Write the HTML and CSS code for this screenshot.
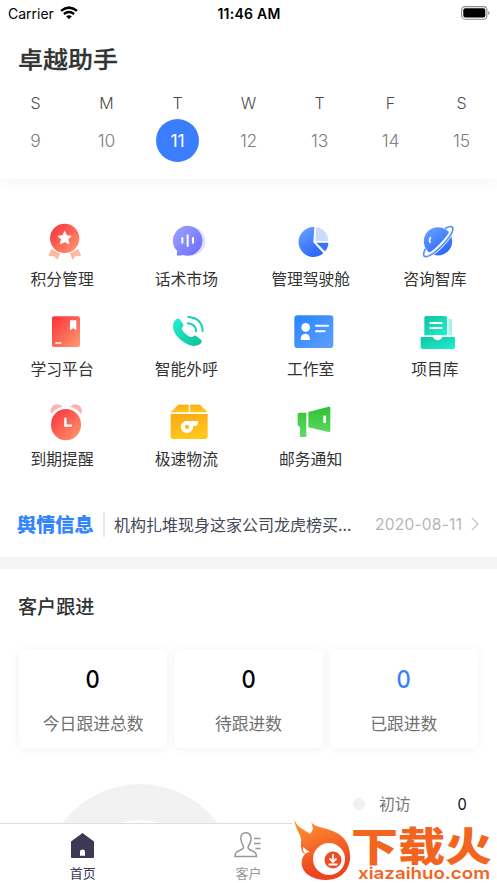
FILE: index.html
```html
<!DOCTYPE html>
<html lang="zh-CN">
<head>
<meta charset="utf-8">
<title>卓越助手</title>
<link rel="stylesheet" href="styles.css">
</head>
<body>
<div class="screen">
  <header class="top">
    <div class="status">
      <div class="carrier"><span>Carrier</span>
        <svg width="18" height="14" viewBox="0 0 18 14" fill="none" stroke="#000" stroke-width="2.5"><path d="M1 4.9Q9-1.7 17 4.9M3.9 8Q9 3.9 14.1 8"/><path d="M9 13.2L6.1 10.3Q9 8.1 11.9 10.3Z" fill="#000" stroke="none"/></svg>
      </div>
      <time class="clock">11:46 AM</time>
      <svg class="battery" width="29" height="14" viewBox="0 0 29 14"><rect x=".6" y=".6" width="25.3" height="12.6" rx="3.4" fill="none" stroke="#8c8c8c" stroke-width="1.1"/><rect x="2.3" y="2.3" width="22" height="9.3" rx="2" /><path d="M27.2 5q1.4.6 1.4 2t-1.4 2z" fill="#8c8c8c"/></svg>
    </div>
    <h1 class="app-name">卓越助手</h1>
    <div class="week names"><span>S</span><span>M</span><span>T</span><span>W</span><span>T</span><span>F</span><span>S</span></div>
    <div class="week days"><span>9</span><span>10</span><span class="today">11</span><span>12</span><span>13</span><span>14</span><span>15</span></div>
  </header>

  <svg class="defs" width="0" height="0">
    <defs>
      <linearGradient id="red" x1="0" y1="0" x2="1" y2="1"><stop stop-color="#f92f3a"/><stop offset="1" stop-color="#ff9b70"/></linearGradient>
      <linearGradient id="purple" x1="0" y1="0" x2="1" y2="1"><stop stop-color="#a1a3ff"/><stop offset="1" stop-color="#696bff"/></linearGradient>
      <linearGradient id="blue" x1="0" y1="0" x2=".6" y2="1"><stop stop-color="#6ba4ff"/><stop offset="1" stop-color="#2c68ff"/></linearGradient>
      <linearGradient id="card" x1="0" y1="0" x2="1" y2="1"><stop stop-color="#2686ff"/><stop offset="1" stop-color="#619fff"/></linearGradient>
      <linearGradient id="teal" x1="0" y1="0" x2="1" y2="1"><stop stop-color="#1ff0d2"/><stop offset="1" stop-color="#13bd95"/></linearGradient>
      <linearGradient id="mint" x1="0" y1="0" x2="1" y2="1"><stop stop-color="#10c49d"/><stop offset="1" stop-color="#1cf0d4"/></linearGradient>
      <linearGradient id="yellow" x1="0" y1="0" x2=".3" y2="1"><stop stop-color="#fba914"/><stop offset="1" stop-color="#ffc71b"/></linearGradient>
      <linearGradient id="green" x1="0" y1="0" x2="0" y2="1"><stop stop-color="#2fc12f"/><stop offset="1" stop-color="#64db68"/></linearGradient>
      <linearGradient id="fire" x1="0" y1="0" x2=".3" y2="1"><stop stop-color="#ff9b32"/><stop offset=".9" stop-color="#ef4420"/></linearGradient>
    </defs>
  </svg>

  <nav class="apps">
    <div class="app"><svg viewBox="111 18 150 150"><path d="M154 117L181 130 172 149 162 139 145 138ZM236 117L209 130 218 149 226 139 243 138Z" fill="#ffb8a1"/><circle cx="194" cy="85" r="47" fill="#fff"/><circle cx="194" cy="85" r="44" fill="url(#red)"/><path d="M194 64L200 76.500L214 78.500 204 88 207 102 194 95.500 181 102 184 88 174 78.500 188 76.500Z" fill="#fff" stroke="#fff" stroke-width="2" stroke-linejoin="round"/></svg><span>积分管理</span></div>
    <div class="app"><svg viewBox="484 18 150 150"><circle cx="574" cy="94" r="43" fill="#deddff"/><path d="M565 47A45 45 0 1 1 550 135Q542 137 534 137Q529 136 533 124A45 45 0 0 1 565 47Z" fill="url(#purple)"/><path d="M548 84V98M564 76V108M580 84V98" stroke="#fff" stroke-width="6" stroke-linecap="round"/></svg><span>话术市场</span></div>
    <div class="app"><svg viewBox="116 18 150 150"><path d="M201 51A45 45 0 1 0 228 130L198 97Z" fill="url(#blue)"/><path d="M207 51A43 43 0 0 1 243 93H204Z" fill="#c9dcff"/><path d="M207 98H243Q243 113 233 124Z" fill="#3974fa"/></svg><span>管理驾驶舱</span></div>
    <div class="app"><svg viewBox="489 18 150 150"><circle cx="573" cy="94" r="42.500" fill="url(#blue)"/><g transform="rotate(-46 574 95)" fill="none"><path d="M519 83C508 97 520 109 574 109S640 97 629 83" stroke="#fff" stroke-width="13"/><path d="M532 82C495 93 515 111 574 111S653 93 616 82" stroke="#5793fb" stroke-width="5"/></g><path d="M550 83Q545 90 549 97" fill="none" stroke="#fff" stroke-width="5" stroke-linecap="round"/></svg><span>咨询智库</span></div>
    <div class="app"><svg viewBox="111 18 150 150"><rect x="156" y="49" width="84" height="92" rx="6" fill="url(#red)"/><path d="M210 61H229V91L220 85 210 91Z" fill="#fff"/><path d="M168 129H182" stroke="#fff" stroke-width="5" stroke-linecap="round"/></svg><span>学习平台</span></div>
    <div class="app"><svg viewBox="484 18 150 150"><path d="M533 56Q536 54 540 58L550 71Q554 75 549 80Q545 84 547 89Q554 101 567 109Q574 113 579 110Q585 104 590 108L604 119Q609 124 604 130Q596 139 581 138Q551 133 529 105Q514 81 524 64Q528 58 533 56Z" fill="url(#teal)"/><path d="M566 51Q607 54 609 93M565 70Q589 73 589 94" fill="none" stroke="#1bcfb4" stroke-width="6" stroke-linecap="round"/></svg><span>智能外呼</span></div>
    <div class="app"><svg viewBox="116 18 150 150"><rect x="141" y="46" width="117" height="98" rx="10" fill="url(#card)"/><circle cx="175" cy="82" r="13" fill="#fff"/><path d="M160 120Q160 101 174 101T188 120Z" fill="#fff"/><path d="M206 77H242M206 94H232" stroke="#fff" stroke-width="6" stroke-linecap="round"/></svg><span>工作室</span></div>
    <div class="app"><svg viewBox="489 18 150 150"><path d="M604 57H611Q615 57 615 62V106H604Z" fill="#a9f3e4"/><path d="M532 106V53Q532 48 537 48H594Q600 48 600 54V106Z" fill="url(#mint)"/><path d="M550 69H584M550 84H584" stroke="#fff" stroke-width="6" stroke-linecap="round"/><path d="M524 111H557Q563 121 572 121T586 111H620Q624 111 624 115V141Q624 147 618 147H527Q521 147 521 141V114Q521 111 524 111Z" fill="url(#mint)"/><path d="M558 105H586Q582 119 572 119T558 105Z" fill="#fff"/></svg><span>项目库</span></div>
    <div class="app"><svg viewBox="111 18 150 150"><path d="M153 72Q149 57 158 48Q174 36 188 50Q166 54 153 72ZM243 73Q249 57 240 48Q225 37 210 50Q232 55 243 73Z" fill="#ffb1ad"/><ellipse cx="198" cy="104" rx="45" ry="47" fill="url(#red)"/><path d="M196 83V107H216" fill="none" stroke="#fff" stroke-width="7"/></svg><span>到期提醒</span></div>
    <div class="app"><svg viewBox="484 18 150 150"><path d="M536 45H566V66H515ZM572 45H601L622 66H572Z" fill="url(#yellow)" stroke="url(#yellow)" stroke-width="2" stroke-linejoin="round"/><path d="M513 72H624V139Q624 147 616 147H521Q513 147 513 139Z" fill="url(#yellow)"/><circle cx="562" cy="111" r="12.500" fill="none" stroke="#fff" stroke-width="12"/><path d="M562 93H596Q596 108 584 108H571Z" fill="#fff"/></svg><span>极速物流</span></div>
    <div class="app"><svg viewBox="116 18 150 150"><path d="M155 68H177V141H158V112L151 106V74Q151 68 155 68ZM183 66L244 50Q249 49 249 55V121Q249 128 243 126L183 112Z" fill="url(#green)"/><path d="M228 77H236V99H228Z" fill="#fff"/></svg><span>邮务通知</span></div>
  </nav>

  <section class="news">
    <strong class="news-tag">舆情信息</strong>
    <p class="headline">机构扎堆现身这家公司龙虎榜买...</p>
    <time class="date">2020-08-11</time>
    <svg class="arrow" width="8" height="14" viewBox="0 0 8 14" fill="none" stroke="#bcbfc4" stroke-width="1.2"><path d="M.8.8L7 7 .8 13.200"/></svg>
  </section>

  <main class="follow">
    <h2>客户跟进</h2>
    <div class="cards">
      <div class="stat"><b>0</b><span>今日跟进总数</span></div>
      <div class="stat"><b>0</b><span>待跟进数</span></div>
      <div class="stat done"><b>0</b><span>已跟进数</span></div>
    </div>
    <div class="chart">
      <div class="ring"></div>
      <div class="legend"><i></i><span>初访</span><b>0</b></div>
    </div>
  </main>

  <footer class="tabs">
    <div class="tab active"><svg width="30" height="28" viewBox="0 0 30 28"><path d="M14.500 2L26 10.500V26Q26 27 25 27H4Q3 27 3 26V10.500Z" fill="#3b3955"/><path d="M12 24.700V20.500Q12 18.500 14.500 18.500T17 20.500V24.700Z" fill="#fff"/></svg><span>首页</span></div>
    <div class="tab"><svg width="30" height="28" viewBox="0 0 30 28" fill="none" stroke="#979797" stroke-width="1.500"><path d="M12.500 1.700C8.500 1.700 7.500 5 8 9Q8.500 12.500 10.300 15Q11.300 17 8.500 18.500L3.500 21.200Q2 22.500 2 25.500H23.500Q23.500 22.500 21.700 21.200L17.500 19Q14 17.200 15.500 15Q18.300 11.500 18 7C17.600 3 15.500 1.700 12.500 1.700Z"/><path d="M21 7.500H27.500M21 12.500H27.500M22.500 17.500H27.500"/></svg><span>客户</span></div>
  </footer>

  <svg class="mark" width="205" height="65" viewBox="0 0 205 65">
    <path d="M0 0H205V65H0Z" fill="#fff"/>
    <path d="M2.500 0C3 9 12 11 18 16Q23 11 19 4C23 9 30 9 38 12C54 17 59 29 58 42C55 58 44 62 33 62C16 61 8 52 10 42Q12 34 18 34Q14 32 11 29Q10 33 14 37Q8 34 9 25C11 17 2 12 2.500 0Z" fill="url(#fire)"/>
    <circle cx="37" cy="41" r="16" fill="#fff"/><circle cx="41" cy="42" r="8.500" fill="#ef4b23"/>
    <path d="M41 36V43M37.500 40.500L41 44 44.500 40.500M36.500 46.500H45.500" fill="none" stroke="#fff" stroke-width="1.800"/>
    <text class="mark-name" x="59" y="43" textLength="141" lengthAdjust="spacingAndGlyphs">下载火</text>
    <text class="mark-site" x="66" y="61" textLength="132" lengthAdjust="spacingAndGlyphs">xiazaihuo.com</text>
  </svg>
</div>
</body>
</html>
```
FILE: styles.css
```css
* { box-sizing: border-box; }
body { margin: 0; background: #fff; font-family: Inter, "Noto Sans CJK SC", sans-serif; color: #333; }
h1, h2, p { margin: 0; }
.screen { position: relative; width: 497px; height: 883px; overflow: hidden; display: flex; flex-direction: column; }
.top { height: 179px; flex: none; box-shadow: 0 4px 14px rgba(0, 0, 0, .045); }
.status { height: 26px; padding: 0 7px 0 8px; display: grid; grid-template-columns: 1fr auto 1fr; align-items: center; color: #000; }
.carrier { display: flex; align-items: center; gap: 6px; font-size: 14px; }
.clock { font-size: 14px; font-weight: 600; letter-spacing: .25px; }
.battery { justify-self: end; }
.app-name { height: 64px; padding-left: 18px; font: 500 25px/64px "Noto Sans CJK SC", sans-serif; -webkit-text-stroke: .3px #333; transform: scaleY(.9); }
.week { display: grid; grid-template-columns: repeat(7, 1fr); justify-items: center; align-items: center; }
.names { height: 26px; font-size: 16px; font-weight: 350; color: #4c4c4c; }
.days { height: 49px; font-size: 17.5px; font-weight: 350; letter-spacing: -.2px; color: #808080; }
.today { width: 43px; height: 43px; border-radius: 50%; background: #3a7eff; color: #fff; font-weight: 400; display: grid; place-items: center; }
.defs { position: absolute; }
.apps { margin-top: 37px; display: grid; grid-template-columns: repeat(4, 1fr); row-gap: 14px; }
.app { height: 76px; display: flex; flex-direction: column; align-items: center; }
.app svg { width: 50px; height: 50px; flex: none; }
.app span { font: 15.8px/26px "Noto Sans CJK SC", sans-serif; white-space: nowrap; }
.news { height: 66px; margin-top: 19px; padding: 0 18px 0 17px; flex: none; display: flex; align-items: center; white-space: nowrap; }
.news-tag { width: 88px; height: 25px; border-right: 2px solid #e6e6e6; color: #3385ff; font: 900 19.2px/24px "Noto Sans CJK SC", sans-serif; }
.headline { margin-left: 9px; width: 261px; color: #444956; font: 16px/26px "Noto Sans CJK SC", sans-serif; }
.date { font-size: 15.5px; color: #b5b6b9; letter-spacing: .25px; }
.arrow { margin-left: auto; }
.follow { border-top: 12px solid #f5f5f5; flex: 1; min-height: 0; overflow: hidden; }
.follow h2 { height: 80px; padding: 0 18px; font: 500 19.1px/74px "Noto Sans CJK SC", sans-serif; }
.cards { display: grid; grid-template-columns: repeat(3, 1fr); gap: 7px; padding: 0 19px; height: 99px; }
.stat { border-radius: 6px; box-shadow: 0 1px 10px rgba(0, 0, 0, .055); display: flex; flex-direction: column; align-items: center; color: #707070; }
.stat b { margin-top: 14px; color: #000; font: 500 24px/33px Inter, sans-serif; transform: scaleX(.92); }
.stat span { margin-top: 14px; font: 16.8px/26px "Noto Sans CJK SC", sans-serif; }
.stat.done b { color: #3a7eff; }
.chart { display: flex; justify-content: space-between; padding: 36px 30px 0 44px; }
.ring { width: 192px; height: 192px; border: 36px solid #f2f2f2; border-radius: 50%; }
.legend { width: 114px; height: 40px; display: flex; align-items: center; font: 15.8px/24px "Noto Sans CJK SC", sans-serif; color: #777; }
.legend i { width: 12px; height: 12px; border-radius: 50%; background: #f1f1f1; margin-right: 14px; }
.legend b { margin-left: auto; color: #111; font: 16px Inter, sans-serif; transform: scaleX(.92); }
.tabs { height: 60px; flex: none; border-top: 1px solid #dedede; display: grid; grid-template-columns: repeat(3, 1fr); background: #fff; }
.tab { display: flex; flex-direction: column; align-items: center; padding-top: 7px; color: #999; font: 13px/27px "Noto Sans CJK SC", sans-serif; }
.tab svg { flex: none; }
.tab.active { color: #3b3955; }
.mark { position: absolute; right: 0; bottom: 0; }
.mark-name { font: 900 40px "Noto Sans CJK SC", sans-serif; fill: #f3651f; }
.mark-site { font: 600 16.5px Inter, sans-serif; fill: #f3651f; }
```
